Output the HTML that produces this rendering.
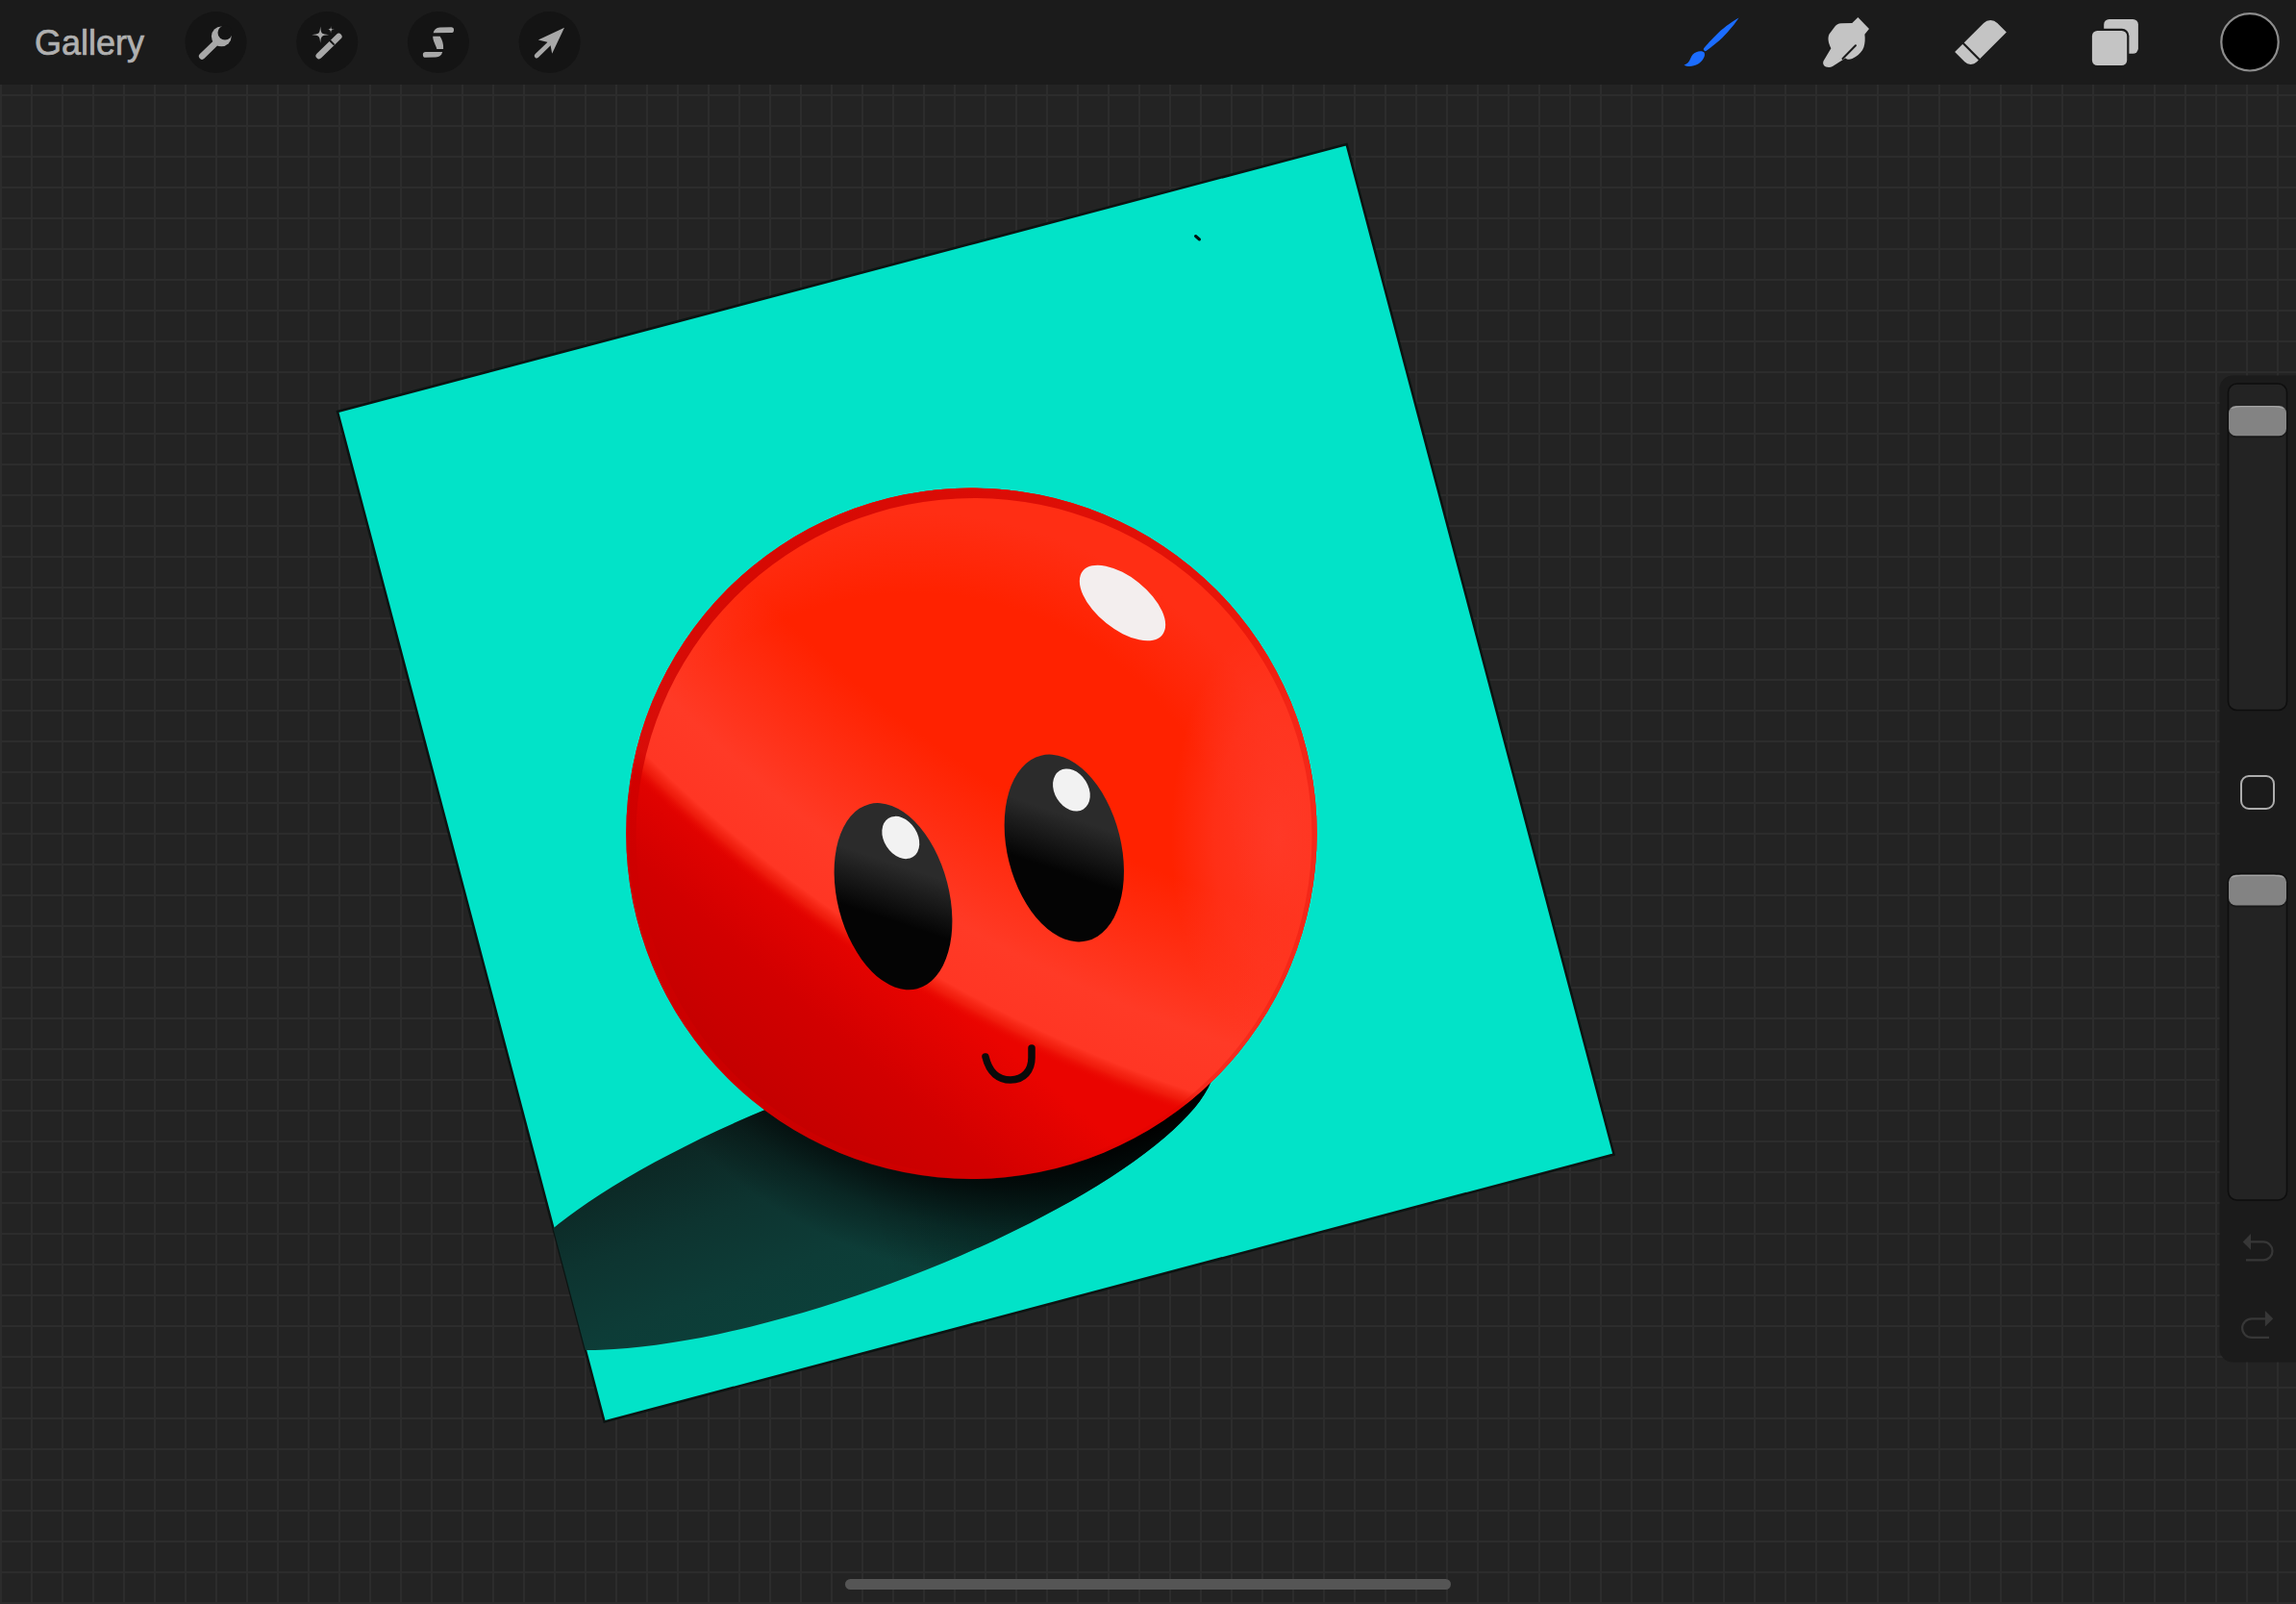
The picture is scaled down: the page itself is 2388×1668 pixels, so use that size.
<!DOCTYPE html>
<html><head><meta charset="utf-8">
<style>
html,body{margin:0;padding:0;}
body{width:2388px;height:1668px;overflow:hidden;position:relative;background:#232323;font-family:"Liberation Sans",sans-serif;}
#grid{position:absolute;left:0;top:88px;width:2388px;height:1580px;
 background-image:linear-gradient(to right,#2c2c2c 2px,transparent 2px),linear-gradient(to bottom,#2c2c2c 2px,transparent 2px);
 background-size:32px 32px;background-position:0px -86px;}
#bar{position:absolute;left:0;top:0;width:2388px;height:88px;background:#1b1b1b;}
#gallery{position:absolute;left:36px;top:23px;font-size:36px;color:#b0b0b0;-webkit-text-stroke:0.7px #b0b0b0;line-height:44px;letter-spacing:0px;}
svg{position:absolute;left:0;top:0;}
</style></head>
<body>
<div id="grid"></div>
<div id="bar"><div id="gallery">Gallery</div></div>
<svg width="2388" height="1668" viewBox="0 0 2388 1668">
<defs>
 <clipPath id="sq"><polygon points="351,428 1400.6,150 1678.6,1200.5 628.6,1478.5"/></clipPath>
 <linearGradient id="shg" gradientUnits="userSpaceOnUse" x1="852.7" y1="1132.7" x2="926.7" y2="1333.5">
  <stop offset="0" stop-color="#0c2623"/>
  <stop offset="0.4" stop-color="#0d3430"/>
  <stop offset="0.75" stop-color="#0d3c37"/>
  <stop offset="1" stop-color="#0c3f39"/>
 </linearGradient>
 <linearGradient id="shg2" gradientUnits="userSpaceOnUse" x1="518" y1="1370" x2="1261" y2="1096">
  <stop offset="0" stop-color="#000" stop-opacity="0"/>
  <stop offset="0.5" stop-color="#000" stop-opacity="0"/>
  <stop offset="1" stop-color="#000" stop-opacity="0.35"/>
 </linearGradient>
 <radialGradient id="shao" gradientUnits="userSpaceOnUse" cx="1060" cy="850" r="480">
  <stop offset="0" stop-color="#000" stop-opacity="1"/>
  <stop offset="0.73" stop-color="#000" stop-opacity="1"/>
  <stop offset="0.8" stop-color="#000" stop-opacity="0.75"/>
  <stop offset="0.9" stop-color="#000" stop-opacity="0.3"/>
  <stop offset="1" stop-color="#000" stop-opacity="0"/>
 </radialGradient>
 <linearGradient id="ballDark" gradientUnits="userSpaceOnUse" x1="760" y1="1120" x2="900" y2="960">
  <stop offset="0" stop-color="#c40000"/>
  <stop offset="0.5" stop-color="#d20000"/>
  <stop offset="1" stop-color="#ea0400"/>
 </linearGradient>
 <radialGradient id="ballLight" gradientUnits="userSpaceOnUse" cx="1715.7" cy="-272.7" r="1510">
  <stop offset="0" stop-color="#ff2200"/>
  <stop offset="0.85" stop-color="#ff2200"/>
  <stop offset="0.945" stop-color="#ff3a26"/>
  <stop offset="0.984" stop-color="#ff3624"/>
  <stop offset="0.9919" stop-color="#f52a14" stop-opacity="0.6"/>
  <stop offset="1" stop-color="#e80800" stop-opacity="0"/>
 </radialGradient>
 <linearGradient id="rimg" gradientUnits="userSpaceOnUse" x1="760" y1="1120" x2="1260" y2="610">
  <stop offset="0" stop-color="#c60000"/>
  <stop offset="1" stop-color="#ea0600"/>
 </linearGradient>
 <radialGradient id="rightlight" gradientUnits="userSpaceOnUse" cx="1330" cy="870" r="140" gradientTransform="translate(1330 870) scale(0.8 1.6) translate(-1330 -870)">
  <stop offset="0" stop-color="#ff3c2c" stop-opacity="0.85"/>
  <stop offset="0.6" stop-color="#ff3c2c" stop-opacity="0.5"/>
  <stop offset="1" stop-color="#ff3c2c" stop-opacity="0"/>
 </radialGradient>
 <linearGradient id="eyeg" gradientUnits="userSpaceOnUse" x1="17" y1="-28" x2="-14" y2="20">
  <stop offset="0" stop-color="#2b2b2b"/>
  <stop offset="1" stop-color="#040404"/>
 </linearGradient>
 <radialGradient id="glow" gradientUnits="userSpaceOnUse" cx="950" cy="960" r="440">
  <stop offset="0" stop-color="#ff3a28" stop-opacity="0"/>
  <stop offset="0.78" stop-color="#ff3a28" stop-opacity="0"/>
  <stop offset="0.97" stop-color="#ff3a28" stop-opacity="0.5"/>
  <stop offset="1" stop-color="#ff3a28" stop-opacity="0.5"/>
 </radialGradient>
 <linearGradient id="rimop" gradientUnits="userSpaceOnUse" x1="760" y1="610" x2="1260" y2="1120">
  <stop offset="0" stop-color="#cc0000" stop-opacity="0.8"/>
  <stop offset="0.45" stop-color="#d00000" stop-opacity="0.6"/>
  <stop offset="0.7" stop-color="#d80000" stop-opacity="0.3"/>
  <stop offset="1" stop-color="#d80000" stop-opacity="0.25"/>
 </linearGradient>
 <clipPath id="ballclip"><circle cx="1010.4" cy="866.8" r="359.2"/></clipPath>
</defs>
<!-- canvas square -->
<polygon points="351,428 1400.6,150 1678.6,1200.5 628.6,1478.5" fill="#02e3c8" stroke="#0b1412" stroke-width="2.5" stroke-linejoin="miter"/>
<path d="M1243.5,245.5 L1247.5,249" stroke="#021010" stroke-width="3" stroke-linecap="round"/>
<!-- shadow -->
<g clip-path="url(#sq)">
 <path d="M518.2,1370.2 A396,107.3 -20.26 1 0 1261.2,1096.0 A396,107.3 -20.26 1 0 518.2,1370.2 Z" fill="url(#shg)"/>
 <path d="M518.2,1370.2 A396,107.3 -20.26 1 0 1261.2,1096.0 A396,107.3 -20.26 1 0 518.2,1370.2 Z" fill="url(#shg2)"/>
 <path d="M518.2,1370.2 A396,107.3 -20.26 1 0 1261.2,1096.0 A396,107.3 -20.26 1 0 518.2,1370.2 Z" fill="url(#shao)"/>
</g>
<!-- ball -->
<circle cx="1010.4" cy="866.8" r="359.2" fill="url(#ballDark)"/>
<g clip-path="url(#ballclip)">
 <circle cx="1715.7" cy="-272.7" r="1510" fill="url(#ballLight)"/>
 <ellipse cx="1310" cy="880" rx="110" ry="250" fill="url(#rightlight)"/>
 <circle cx="1010.4" cy="866.8" r="360" fill="url(#glow)"/>
</g>
<path d="M651.2,866.8 A359.2,359.2 0 1 0 1369.6,866.8 A359.2,359.2 0 1 0 651.2,866.8 Z M661.5,869.5 A351.5,351.5 0 1 1 1364.5,869.5 A351.5,351.5 0 1 1 661.5,869.5 Z" fill="url(#rimop)" fill-rule="evenodd"/>
<!-- highlight -->
<ellipse cx="1167.5" cy="627" rx="53" ry="27" transform="rotate(38.7 1167.5 627)" fill="#f3eeee"/>
<!-- eyes -->
<g transform="translate(929 932.2) rotate(-14.5)"><ellipse cx="0" cy="0" rx="58" ry="99.2" fill="url(#eyeg)"/></g>
<ellipse cx="936.8" cy="871" rx="17.4" ry="23.8" transform="rotate(-32.6 936.8 871)" fill="#f2f2f2"/>
<g transform="translate(1106.8 882) rotate(-14)"><ellipse cx="0" cy="0" rx="59.1" ry="99.3" fill="url(#eyeg)"/></g>
<ellipse cx="1114.4" cy="821.5" rx="17.5" ry="23.5" transform="rotate(-32 1114.4 821.5)" fill="#f2f2f2"/>
<!-- mouth -->
<path d="M1025,1099 C1029,1116 1039,1123 1051,1123 C1065,1123 1073,1113 1073,1100 L1073,1090" fill="none" stroke="#0a0a0a" stroke-width="7.5" stroke-linecap="round"/>

<!-- ===== toolbar icons ===== -->
<g id="lefticons">
 <circle cx="224.5" cy="44" r="32" fill="#141414"/>
 <circle cx="340.2" cy="44" r="32" fill="#141414"/>
 <circle cx="455.9" cy="44" r="32" fill="#141414"/>
 <circle cx="571.6" cy="44" r="32" fill="#141414"/>
 <!-- wrench -->
 <g fill="#a8a8a8">
  <line x1="210.2" y1="58.4" x2="225" y2="44" stroke="#a8a8a8" stroke-width="6.6" stroke-linecap="round"/>
  <circle cx="230.3" cy="37.8" r="10.4"/>
  <circle cx="234" cy="34" r="7.5" fill="#141414"/>
 </g>
 <!-- magic wand -->
 <g fill="#a8a8a8">
  <line x1="331.8" y1="58" x2="352.3" y2="38" stroke="#a8a8a8" stroke-width="6.6" stroke-linecap="round"/>
  <line x1="343" y1="42" x2="347.6" y2="46.6" stroke="#141414" stroke-width="2"/>
  <path d="M333.2,27.6 C334.09,35.34 334.09,35.34 342.09999999999997,36.2 C334.09,37.06 334.09,37.06 333.2,44.800000000000004 C332.31,37.06 332.31,37.06 324.3,36.2 C332.31,35.34 332.31,35.34 333.2,27.6 Z"/>
  <path d="M344.1,26.900000000000002 C344.48,30.41 344.48,30.41 347.90000000000003,30.8 C344.48,31.19 344.48,31.19 344.1,34.7 C343.72,31.19 343.72,31.19 340.3,30.8 C343.72,30.41 343.72,30.41 344.1,26.900000000000002 Z"/>
 </g>
 <!-- selection -->
 <g fill="#a8a8a8">
  <path d="M450.6,34.2 C451.5,31 453.5,28.8 457.5,28.5 L469.2,28.3 A2.85,2.85 0 0 1 469.2,34 Z"/>
  <path d="M450.2,37.8 L457.6,37.8 C460,41.5 461.4,45.5 461.1,50.9 L454.3,50.9 C453.2,46.5 450.2,43 450.2,37.8 Z"/>
  <path d="M460.2,54.1 C459.3,57.3 457.2,59.4 453.2,59.6 L442.7,59.8 A2.85,2.85 0 0 1 442.7,54.1 Z"/>
 </g>
 <!-- arrow -->
 <g fill="#a8a8a8">
  <path d="M587,28.8 L559.8,41.4 L569.2,43.8 L572.6,47.2 L574.2,55.8 Z"/>
  <line x1="571" y1="45.6" x2="558.2" y2="58" stroke="#a8a8a8" stroke-width="4.8" stroke-linecap="round"/>
 </g>
</g>
<g id="righticons">
 <!-- brush -->
 <g fill="#1b6cff">
  <path transform="translate(1773.8 51.2) rotate(-43.3)" d="M0,-1.9 C6,-2.6 14,-3.3 21,-3.3 C31,-3.1 42,-1.6 47.6,0 C42,1.6 31,3.1 21,3.3 C14,3.3 6,2.6 0,1.9 A1.9,1.9 0 0 1 0,-1.9 Z"/>
  <path d="M1772.5,54.5 C1770,52.3 1764,52.8 1760.5,56.8 C1758.4,59.4 1758,62.8 1755.6,65.3 C1754.2,66.6 1752.6,67 1751.5,67.8 C1755,69.6 1761.2,69.6 1766.2,66.6 C1771.2,63.2 1774.2,58 1772.5,54.5 Z"/>
 </g>
 <!-- smudge -->
 <path d="M1896.5,63.5 L1904.4,50.2 C1901.8,45 1900.5,40 1902.5,35.5 L1908.5,27.6 C1910,25.6 1912,24.5 1915,24.3 L1926.3,24 L1932.4,18.1 L1944,30.1 L1939.4,35.8 C1940,40 1939.8,45 1938.5,49 C1937,53 1934,56.5 1930,59 C1927,61 1924,62.3 1921,61.5 L1919.3,60.5 L1906,69 C1904,70.3 1901,70.2 1899,69.5 C1896.5,68.5 1895.5,66 1896.5,63.5 Z" fill="#c4c4c4"/>
 <line x1="1930" y1="47.3" x2="1916.5" y2="61" stroke="#1b1b1b" stroke-width="2" stroke-linecap="round"/>
 <!-- eraser -->
 <g transform="translate(2060 43.85) rotate(-45)">
  <path d="M-26.25,-11.75 L16.25,-11.75 A10,10 0 0 1 26.25,-1.75 L26.25,11.75 L-17.25,11.75 A9,9 0 0 1 -26.25,2.75 Z" fill="#c4c4c4"/>
  <rect x="-14.8" y="-13" width="2.2" height="26" fill="#1b1b1b"/>
 </g>
 <!-- layers -->
 <rect x="2188.2" y="20" width="35.7" height="35.8" rx="5.5" fill="#c4c4c4"/>
 <rect x="2173.7" y="29.8" width="40.7" height="40.4" rx="7.5" fill="#1b1b1b"/>
 <rect x="2175.9" y="32" width="36.3" height="36" rx="5.5" fill="#c4c4c4"/>
 <!-- color -->
 <circle cx="2340" cy="43.8" r="29.7" fill="#000" stroke="#8c8c8c" stroke-width="2.2"/>
</g>
<!-- ===== sidebar ===== -->
<g id="sidebar">
 <rect x="2308.5" y="390.5" width="100" height="1026" rx="14" fill="#1b1b1b"/>
 <rect x="2317.5" y="399" width="61" height="339.5" rx="9" fill="#232323" stroke="#0e0e0e" stroke-width="1.6"/>
 <rect x="2318" y="424" width="60" height="31.3" rx="7.5" fill="#111" fill-opacity="0.55"/>
 <rect x="2318" y="422" width="60" height="31.3" rx="7.5" fill="#838383"/>
 <path d="M2321,424.5 Q2325.5,422.6 2331,422.6 L2365,422.6 Q2370.5,422.6 2375,424.5" stroke="#a4a4a4" stroke-width="1.2" fill="none"/>
 <rect x="2331" y="807" width="34" height="34" rx="8" fill="none" stroke="#adadad" stroke-width="2"/>
 <rect x="2317.5" y="908.5" width="61" height="339.5" rx="9" fill="#232323" stroke="#0e0e0e" stroke-width="1.6"/>
 <rect x="2318" y="911.8" width="60" height="31.7" rx="7.5" fill="#111" fill-opacity="0.55"/>
 <rect x="2318" y="909.8" width="60" height="31.7" rx="7.5" fill="#838383"/>
 <path d="M2321,912.3 Q2325.5,910.4 2331,910.4 L2365,910.4 Q2370.5,910.4 2375,912.3" stroke="#a4a4a4" stroke-width="1.2" fill="none"/>
 <g stroke="#373737" stroke-width="2.2" fill="none">
  <path d="M2340,1291.4 L2354,1291.4 A9.5,9.5 0 0 1 2354,1310.4 L2336,1310.4"/>
  <path d="M2356.3,1371.3 L2341.9,1371.3 A9.8,9.8 0 0 0 2341.9,1390.9 L2360,1390.9"/>
 </g>
 <g fill="#373737">
  <path d="M2332.7,1291.4 L2341,1283 L2341,1299.8 Z"/>
  <path d="M2364.2,1371.3 L2355.9,1363 L2355.9,1379.6 Z"/>
 </g>
</g>
<!-- home indicator -->
<rect x="879" y="1642" width="630" height="11" rx="5.5" fill="#555555"/>
</svg>
</body></html>
